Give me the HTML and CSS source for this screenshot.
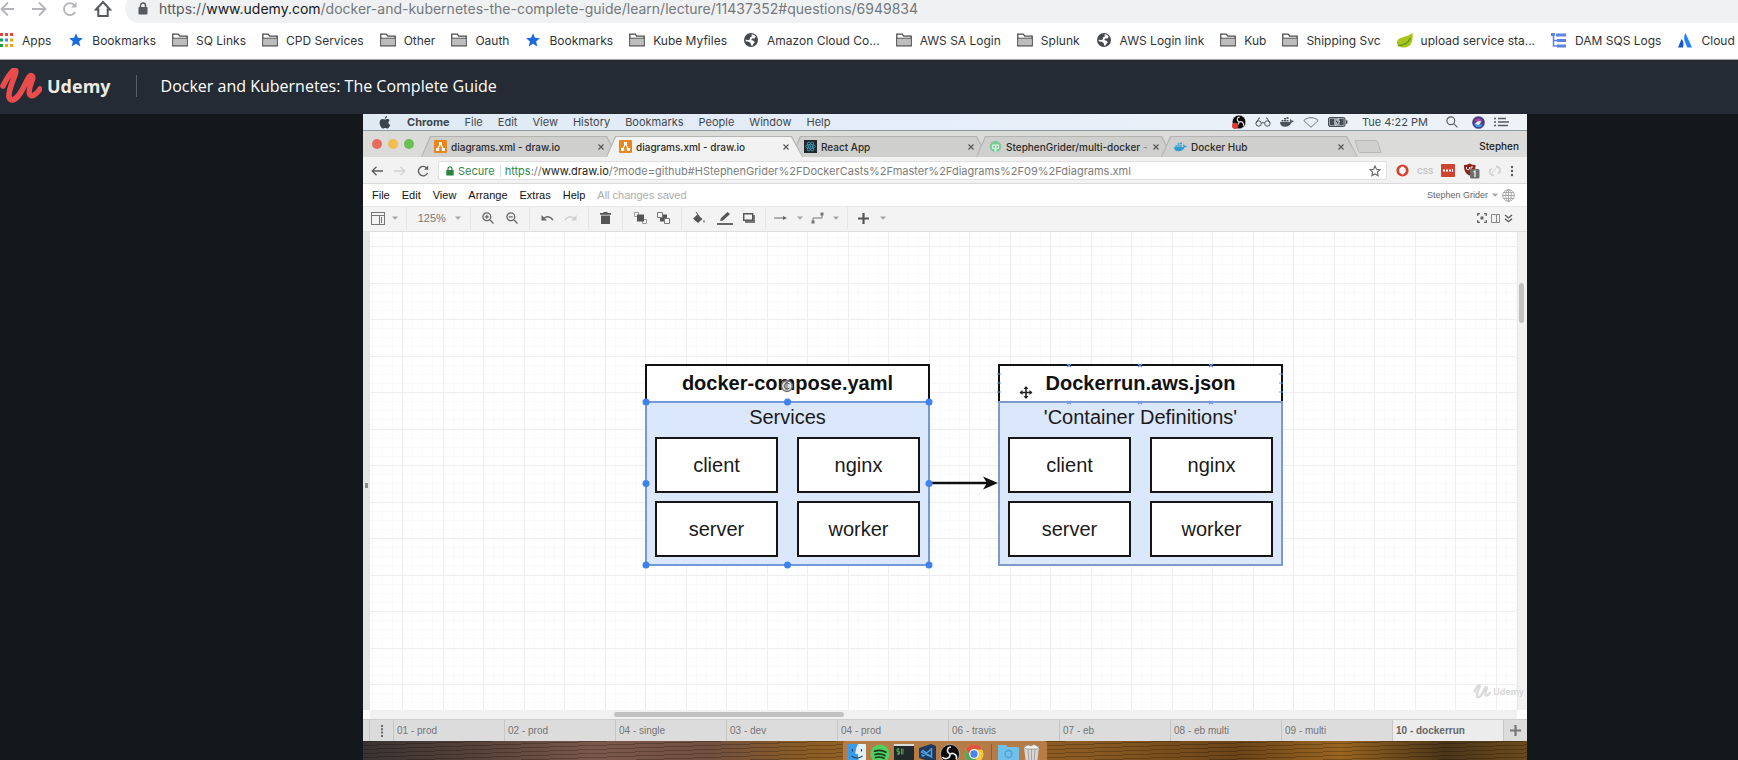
FILE: index.html
```html
<!DOCTYPE html>
<html lang="en">
<head>
<meta charset="utf-8">
<title>Docker and Kubernetes: The Complete Guide</title>
<link rel="stylesheet" href="styles.css">
</head>
<body>
<svg class="defs" aria-hidden="true">
  <symbol id="folder" viewBox="0 0 16 14"><path d="M.8 12.8V1.2h5.4l1.6 2h7.4v9.6z" fill="#fff" stroke="#4a4a4a" stroke-width="1.3"/><path d="M1.6 5.6h12.8V12H1.6z" fill="#bdbdbd"/><path d="M1 5.2h14" stroke="#4a4a4a"/></symbol>
  <symbol id="star" viewBox="0 0 16 16"><path d="M8 1.2l1.9 4.6 5 .4-3.8 3.3 1.2 4.9L8 11.8l-4.3 2.6 1.2-4.9L1.100 6.200l5-.4z" fill="#1a6be0"/></symbol>
  <symbol id="globe" viewBox="0 0 16 16"><circle cx="8" cy="8" r="7" fill="#46494d"/><path d="M8.500 2.200c2 .2 3.400 1.100 4.300 2.600l-1.400 1.600-2.200.2-1 1.400 2.400.8 1.200 1.600-1.600 1.600-.8 1.800-1.200-.4-.6-2.400-2-1.200-3-.6.2-1.600 2.400.6 1.600-1 .2-1.800 1.800-.8z" fill="#fff"/></symbol>
  <symbol id="caret" viewBox="0 0 6 4"><path d="M0 .5h6L3 3.700z" fill="#a5a5a5"/></symbol>
  <symbol id="drawio" viewBox="0 0 13 13"><rect width="13" height="13" rx="1" fill="#e8871e"/><path d="M6.500 4L3.500 9M6.500 4l3 5" stroke="#fff" stroke-width="1.200"/><path d="M5 2h3v3H5zM2 8h3.200v3H2zM7.800 8H11v3H7.800z" fill="#fff"/></symbol>
  <symbol id="close" viewBox="0 0 8 8"><path d="M1.500 1.500l5 5m0-5l-5 5" stroke="#555" stroke-width="1.100"/></symbol>
  <symbol id="whale" viewBox="0 0 14 10"><path d="M0 5h10.300c-.7-1.200-.5-2.200.1-3 .8.500 1.100 1.100 1.200 1.700.8-.2 1.600 0 2.200.4-.5 1-1.400 1.300-2.400 1.300C10.300 8.300 8 9.700 5 9.700 1.700 9.700.1 8 0 5zM1.500 3h2v1.600h-2zM4 3h2v1.600H4zM6.500 3h2v1.600h-2zM4 1h2v1.600H4zM6.500.2h2v1.900h-2z"/></symbol>
  <symbol id="obs" viewBox="0 0 20 20"><circle cx="10" cy="10" r="9.500" fill="#090909" stroke="#c9c9c9" stroke-width=".6"/><g fill="none" stroke="#e6e6e6" stroke-width="1.600"><path d="M10 10C6 8 7 3 11 3"/><path d="M10 10c4-2 8 2 6 5.500"/><path d="M10 10c.5 4.500-5 6-7.500 3"/></g></symbol>
  <symbol id="umark" viewBox="0 0 42 36"><path d="M3 18C7 10 11 4 14 2c2.500-.5 2 2 1 5C12 15 8 24 9 29c1.500 6 8 2 12-5 3-5 6-12 8-15 2-2.500 4.500-1 3.500 2-1.500 5-4.500 11-3 14.500C31 30 36 27 40 21" fill="none" stroke-width="5.600" stroke-linecap="round" stroke-linejoin="round"/></symbol>
</svg>

<header class="browser">
  <nav class="address-row" aria-label="Navigation">
    <button class="nav-btn" aria-label="Back"><svg width="16" height="16" viewBox="0 0 16 16"><path d="M14 8H2m6-6.500L1.500 8 8 14.500" fill="none" stroke="#b3b5b8" stroke-width="1.800"/></svg></button>
    <button class="nav-btn" aria-label="Forward"><svg width="16" height="16" viewBox="0 0 16 16"><path d="M1 8h13M8 1.500L14.500 8 8 14.500" fill="none" stroke="#b3b5b8" stroke-width="1.800"/></svg></button>
    <button class="nav-btn" aria-label="Reload"><svg width="16" height="16" viewBox="0 0 16 16"><path d="M13.200 11A6 6 0 1 1 12.400 4" fill="none" stroke="#b3b5b8" stroke-width="1.800"/><path d="M14.500 1v5.500H9z" fill="#b3b5b8"/></svg></button>
    <button class="nav-btn home" aria-label="Home"><svg width="16" height="18" viewBox="1 0 16 18"><path d="M2 9.500L9 2l7 7.500h-2.300V16H4.300V9.500z" fill="none" stroke="#55585c" stroke-width="2"/></svg></button>
    <div class="omnibox">
      <svg width="10" height="13" viewBox="0 0 10 13"><rect x=".5" y="5" width="9" height="7.500" rx="1" fill="#55585c"/><path d="M2.500 5.500V3.500a2.500 2.500 0 0 1 5 0v2" fill="none" stroke="#55585c" stroke-width="1.400"/></svg>
      <span class="omnibox-url"><span class="scheme">https://</span><span class="host">www.udemy.com</span>/docker-and-kubernetes-the-complete-guide/learn/lecture/11437352#questions/6949834</span>
    </div>
  </nav>
  <nav class="bookmarks" aria-label="Bookmarks">
    <a href="#" class="apps"><svg width="14" height="16" viewBox="0 0 14 16"><path fill="#ea4335" d="M0 1h3v3H0zM5 1h3v3H5zM10 1h3v3h-3z"/><path fill="#0f9d58" d="M0 6.500h3v3H0zM0 12h3v3H0z"/><path fill="#4285f4" d="M5 6.500h3v3H5z"/><path fill="#f4a400" d="M10 6.500h3v3h-3zM5 12h3v3H5zM10 12h3v3h-3z"/></svg>Apps</a>
    <a href="#"><svg width="16" height="16"><use href="#star"/></svg>Bookmarks</a>
    <a href="#"><svg width="16" height="14"><use href="#folder"/></svg>SQ Links</a>
    <a href="#"><svg width="16" height="14"><use href="#folder"/></svg>CPD Services</a>
    <a href="#"><svg width="16" height="14"><use href="#folder"/></svg>Other</a>
    <a href="#"><svg width="16" height="14"><use href="#folder"/></svg>Oauth</a>
    <a href="#"><svg width="16" height="16"><use href="#star"/></svg>Bookmarks</a>
    <a href="#"><svg width="16" height="14"><use href="#folder"/></svg>Kube Myfiles</a>
    <a href="#"><svg width="16" height="16"><use href="#globe"/></svg>Amazon Cloud Co...</a>
    <a href="#"><svg width="16" height="14"><use href="#folder"/></svg>AWS SA Login</a>
    <a href="#"><svg width="16" height="14"><use href="#folder"/></svg>Splunk</a>
    <a href="#"><svg width="16" height="16"><use href="#globe"/></svg>AWS Login link</a>
    <a href="#"><svg width="16" height="14"><use href="#folder"/></svg>Kub</a>
    <a href="#"><svg width="16" height="14"><use href="#folder"/></svg>Shipping Svc</a>
    <a href="#"><svg width="16" height="16" viewBox="0 0 16 16"><path d="M15.500.5c.8 6-.2 14-7 15C4 16 0 14.500 0 10.500 0 4 11 6 15.500.5z" fill="#a9c61c"/><path d="M1 13.500c6 0 10.500-3 12.500-7.500" fill="none" stroke="#5d9a1f" stroke-width="1.400"/></svg>upload service sta...</a>
    <a href="#"><svg width="16" height="16" viewBox="0 0 16 16"><path d="M0 1h4v3H0zM5 1.500h10v3H5zM6 7h9v3H6zM6 12.500h9v3H6z" fill="#5b83e6"/><path d="M2.500 4v10H6M2.500 8.500H6" fill="none" stroke="#5b83e6" stroke-width="1.500"/></svg>DAM SQS Logs</a>
    <a href="#"><svg width="16" height="16" viewBox="0 0 16 16"><path d="M4.500 7c1.800 2 2.700 4.500 1.500 8.500H1z" fill="#1558cf"/><path d="M8.500 1L15 15.500h-4.800C9 11 5 7 8.500 1z" fill="#2480ff"/></svg>Cloud I</a>
  </nav>
</header>

<header class="course">
  <a href="#" class="brand"><svg width="42" height="36" stroke="#ea4c4c"><use href="#umark"/></svg>Udemy</a>
  <h1>Docker and Kubernetes: The Complete Guide</h1>
</header>

<main class="player">
 <div class="screen">
  <div class="menubar">
    <svg class="apple" width="12" height="13" viewBox="0 0 12 13"><path d="M8 0c.1 1.500-1 2.700-2.300 2.700C5.600 1.400 6.700.2 8 0zM6 3.600c.7 0 1.300-.6 2.400-.6 1 0 1.900.5 2.400 1.300-2 1.200-1.700 3.900.4 4.700-.6 1.600-1.700 3.500-2.900 3.500-.8 0-1.100-.5-2.100-.5s-1.400.5-2.100.5C2.700 12.500.6 9.500.6 6.700.6 4.400 2 3.100 3.700 3.100c1 0 1.700.5 2.300.5z" fill="#3b444d"/></svg>
    <b>Chrome</b><span>File</span><span>Edit</span><span>View</span><span>History</span><span>Bookmarks</span><span>People</span><span>Window</span><span>Help</span>
    <div class="status">
      <svg width="14" height="14" viewBox="0 0 20 20"><use href="#obs"/><circle cx="4.500" cy="15.500" r="4.500" fill="#e03a30"/></svg>
      <svg width="16" height="10" viewBox="0 0 16 10" fill="none" stroke="#4a535c"><circle cx="3.600" cy="6.500" r="2.700"/><circle cx="12.400" cy="6.500" r="2.700"/><path d="M6.300 6.200q1.700-1.200 3.400 0M1 6l3-5h1M15 6l-3-5h-1"/></svg>
      <svg width="14" height="10" fill="#4a535c"><use href="#whale"/></svg>
      <svg width="16" height="11" viewBox="0 0 16 11"><path d="M.8 3.500C5-.3 11-.3 15.200 3.500L8 10.300z" fill="none" stroke="#6a737b"/></svg>
      <svg class="battery" width="20" height="10" viewBox="0 0 20 10"><rect x=".5" y=".5" width="16.500" height="9" rx="1.500" fill="#9aa2a9" stroke="#444c54"/><path d="M2 2h4v6H2zM11.500 2h4v6h-4zM18 3.300h1.400v3.400H18z" fill="#444c54"/><path d="M10.500 1L6.500 5.500h2.300L7.500 9l4.300-4.700H9.300z" fill="#333b42" stroke="#e8eef5" stroke-width=".6"/></svg>
      <span class="clock">Tue 4:22 PM</span>
      <svg class="find" width="12" height="12" viewBox="0 0 12 12" fill="none" stroke="#59626a" stroke-width="1.200"><circle cx="4.800" cy="4.800" r="3.900"/><path d="M7.700 7.700l3.700 3.700"/></svg>
      <svg class="siri" width="13" height="13" viewBox="0 0 13 13"><circle cx="6.500" cy="6.500" r="6.300" fill="#4b3d86"/><path d="M2 8.500a5 5 0 0 0 9 0z" fill="#3f9be0"/><path d="M2.500 4.500a5 5 0 0 1 8 0L6 6z" fill="#b0489c"/><path d="M2.500 8Q6 4 9.500 5.500L7 9z" fill="#dcebf8"/></svg>
      <svg width="15" height="10" viewBox="0 0 15 10" stroke="#535c64" stroke-width="1.400"><path d="M0 1.500h2M0 5h2M0 8.500h2M4 1.500h8M4 5h11M4 8.500h10"/></svg>
    </div>
  </div>

  <div class="tabstrip">
    <div class="lights"><i class="red"></i><i class="amber"></i><i class="green"></i></div>
    <div class="tab"><svg width="13" height="13"><use href="#drawio"/></svg><span>diagrams.xml - draw.io</span><button aria-label="Close tab"><svg width="8" height="8"><use href="#close"/></svg></button></div>
    <div class="tab active"><svg width="13" height="13"><use href="#drawio"/></svg><span>diagrams.xml - draw.io</span><button aria-label="Close tab"><svg width="8" height="8"><use href="#close"/></svg></button></div>
    <div class="tab"><svg width="13" height="13" viewBox="0 0 13 13"><rect width="13" height="13" fill="#20282e"/><g fill="none" stroke="#3d9fbd" stroke-width=".8"><ellipse cx="6.500" cy="6.500" rx="5" ry="2"/><ellipse cx="6.500" cy="6.500" rx="5" ry="2" transform="rotate(60 6.500 6.500)"/><ellipse cx="6.500" cy="6.500" rx="5" ry="2" transform="rotate(120 6.500 6.500)"/></g><circle cx="6.500" cy="6.500" r="1" fill="#3d9fbd"/></svg><span>React App</span><button aria-label="Close tab"><svg width="8" height="8"><use href="#close"/></svg></button></div>
    <div class="tab"><svg width="13" height="13" viewBox="0 0 13 13"><circle cx="6.500" cy="6.500" r="5.800" fill="#7ccb98"/><path d="M3 4.500h7v4.500H3zM5.500 9h2v3h-2z" fill="#cfeeda"/><path d="M4.500 6h1.200v1.600H4.500zM7.500 6h1.200v1.600H7.500z" fill="#4fae74"/></svg><span>StephenGrider/multi-docker <em>-</em></span><button aria-label="Close tab"><svg width="8" height="8"><use href="#close"/></svg></button></div>
    <div class="tab"><svg width="13" height="10" fill="#2f9fd0"><use href="#whale"/></svg><span>Docker Hub</span><button aria-label="Close tab"><svg width="8" height="8"><use href="#close"/></svg></button></div>
    <button class="new-tab" aria-label="New tab"><svg width="28" height="13" viewBox="0 0 28 13"><path d="M1 .5h20.500q1.500 0 2 1L27 12.500H6.500q-1.500 0-2-1z" fill="#d0d0ce" stroke="#b9b9b7"/></svg></button>
    <span class="profile">Stephen</span>
  </div>

  <div class="inner-address">
    <button aria-label="Back"><svg width="12" height="10" viewBox="0 0 12 10"><path d="M12 5H1.500m4-4.300L1.200 5l4.300 4.300" fill="none" stroke="#5b5b5b" stroke-width="1.300"/></svg></button>
    <button aria-label="Forward"><svg width="12" height="10" viewBox="0 0 12 10"><path d="M0 5h10.500m-4-4.300L10.800 5 6.500 9.300" fill="none" stroke="#d2d2d2" stroke-width="1.300"/></svg></button>
    <button aria-label="Reload"><svg width="12" height="12" viewBox="0 0 12 12"><path d="M10.500 8A4.700 4.700 0 1 1 9.500 2.800" fill="none" stroke="#5b5b5b" stroke-width="1.300"/><path d="M11.200.5v4.200H7z" fill="#5b5b5b"/></svg></button>
    <div class="inner-omnibox">
      <svg width="8" height="10" viewBox="0 0 8 10"><rect x=".3" y="4" width="7.400" height="5.500" rx=".6" fill="#2c8242"/><path d="M2 4.500V2.800a2 2 0 0 1 4 0v1.700" fill="none" stroke="#2c8242" stroke-width="1.200"/></svg>
      <span class="secure">Secure</span>
      <span class="inner-url"><span class="scheme">https</span>://<span class="host">www.draw.io</span>/?mode=github#HStephenGrider%2FDockerCasts%2Fmaster%2Fdiagrams%2F09%2Fdiagrams.xml</span>
      <svg class="fav" width="12" height="12" viewBox="0 0 12 12"><path d="M6 1l1.500 3.300 3.500.4-2.600 2.400.7 3.600L6 8.900l-3.100 1.800.7-3.600L1 4.700l3.500-.4z" fill="none" stroke="#666" stroke-width="1.100"/></svg>
    </div>
    <div class="extensions">
      <svg width="13" height="13" viewBox="0 0 13 13"><circle cx="6.500" cy="6.500" r="4.700" fill="#fff" stroke="#d8432f" stroke-width="2.800"/><ellipse cx="6.500" cy="6.500" rx="2" ry="4" fill="#fff"/></svg>
      <span class="css-ext">CSS</span>
      <svg width="14" height="13" viewBox="0 0 14 13"><rect width="14" height="13" rx="1" fill="#cf4430"/><path d="M2 5.500h2v2H2zM5 5.500h2v2H5zM8 5.500h2v2H8zM11 5h1v3h-1z" fill="#fff"/></svg>
      <svg width="17" height="16" viewBox="0 0 17 16"><path d="M1 2q3 0 5.500-1.500Q9 2 12.500 2c0 6-1.500 8.500-6 10.500C2 10.500 1 7 1 2z" fill="#8d2418"/><path d="M3.500 4v2q1.500 2 3 0V4m1.500 3V4h2" fill="none" stroke="#eee"/><rect x="7" y="6" width="9.500" height="9.500" rx="1.500" fill="#6d6d6d"/><path d="M10.500 9l1.500-1v6" fill="none" stroke="#fff" stroke-width="1.200"/></svg>
      <svg width="14" height="12" viewBox="0 0 14 12" fill="none" stroke="#d3d3d3" stroke-width="1.800"><path d="M6 10.500C1 10 .5 5 4 3.500M8 1.500c5 .5 5.500 5.500 2 7"/><path d="M4 8l4-5" stroke-width="1"/></svg>
      <svg width="4" height="12" viewBox="0 0 4 12" fill="#5c5c5c"><circle cx="2" cy="2" r="1.200"/><circle cx="2" cy="6" r="1.200"/><circle cx="2" cy="10" r="1.200"/></svg>
    </div>
  </div>

  <div class="app-menu">
    <button>File</button><button>Edit</button><button>View</button><button>Arrange</button><button>Extras</button><button>Help</button>
    <span class="saved">All changes saved</span>
    <button class="account">Stephen Grider<svg width="6" height="4"><use href="#caret"/></svg></button>
    <button aria-label="Language"><svg width="13" height="13" viewBox="0 0 13 13" fill="none" stroke="#a9a9a9"><circle cx="6.500" cy="6.500" r="5.800"/><ellipse cx="6.500" cy="6.500" rx="2.800" ry="5.800"/><path d="M6.500.7v11.600M.7 6.500h11.600M1.500 3.500h10M1.500 9.500h10"/></svg></button>
  </div>

  <div class="toolbar">
    <div class="group layout"><button aria-label="View"><svg width="14" height="13" viewBox="0 0 14 13" fill="none" stroke="#777"><rect x=".5" y=".5" width="13" height="12"/><path d="M.5 3.500h13M8.500 3.500v9M10.500 5v6"/></svg></button><svg width="6" height="4"><use href="#caret"/></svg></div>
    <div class="group zoom"><select aria-label="Zoom"><option>125%</option></select><svg width="6" height="4"><use href="#caret"/></svg></div>
    <div class="group pair"><button aria-label="Zoom in"><svg width="12" height="12" viewBox="0 0 12 12" fill="none" stroke="#666" stroke-width="1.300"><circle cx="4.800" cy="4.800" r="3.900"/><path d="M7.700 7.700l3.800 3.800M2.800 4.800h4M4.800 2.800v4"/></svg></button><button aria-label="Zoom out"><svg width="12" height="12" viewBox="0 0 12 12" fill="none" stroke="#666" stroke-width="1.300"><circle cx="4.800" cy="4.800" r="3.900"/><path d="M7.700 7.700l3.800 3.800M2.800 4.800h4"/></svg></button></div>
    <div class="group pair"><button aria-label="Undo"><svg width="13" height="8" viewBox="0 0 13 8"><path d="M2 5q5-5 10 1" fill="none" stroke="#666" stroke-width="1.600"/><path d="M.5 1v5.500H6z" fill="#666"/></svg></button><button aria-label="Redo"><svg width="13" height="8" viewBox="0 0 13 8"><path d="M11 5Q6 0 1 6" fill="none" stroke="#cfcfcf" stroke-width="1.600"/><path d="M12.500 1v5.500H7z" fill="#cfcfcf"/></svg></button></div>
    <div class="group single"><button aria-label="Delete"><svg width="11" height="12" viewBox="0 0 11 12" fill="#555"><path d="M0 1h3.500V0h4v1H11v1.700H0zM1 3.500h9V12H1z"/></svg></button></div>
    <div class="group pair"><button aria-label="To front"><svg width="13" height="12" viewBox="0 0 13 12"><path d="M.5.500h4v4h-4zM8.500 7.500h4v4h-4z" fill="none" stroke="#999"/><path d="M3 2.500h7v7H3z" fill="#555"/></svg></button><button aria-label="To back"><svg width="13" height="12" viewBox="0 0 13 12"><path d="M3 2.500h7v7H3z" fill="#555"/><path d="M.5.500h5v5h-5zM7.500 6.500h5v5h-5z" fill="#f3f3f3" stroke="#777"/></svg></button></div>
    <div class="group triple"><button aria-label="Fill"><svg width="14" height="12" viewBox="0 0 14 12"><path d="M5.500 2.500L10.500 7 6 11 1 6.500z" fill="#555"/><path d="M4 0l3 4" stroke="#555"/><path d="M12 7.500q1.600 2.500 0 3.200-1.600-.7 0-3.200z" fill="#777"/></svg></button><button aria-label="Line"><svg width="16" height="13" viewBox="0 0 16 13"><path d="M0 11h16v2H0z" fill="#666"/><path d="M3 9l1-3 6.500-6L13 2 6 8.500z" fill="#555"/></svg></button><button aria-label="Shadow"><svg width="12" height="10" viewBox="0 0 12 10"><path d="M2 2h10v8H2z" fill="#777"/><path d="M.7.700h9v6.600h-9z" fill="#f3f3f3" stroke="#555" stroke-width="1.400"/></svg></button></div>
    <div class="group lines"><button aria-label="Connection"><svg width="14" height="6" viewBox="0 0 14 6"><path d="M0 3h10" stroke="#666"/><path d="M9 1l4 2-4 2z" fill="#666"/></svg></button><svg width="6" height="4"><use href="#caret"/></svg><button aria-label="Waypoints"><svg width="13" height="12" viewBox="0 0 13 12"><path d="M2 10V6h9V2" fill="none" stroke="#777"/><path d="M.5 8.500h3v3h-3zM9.500.500h3v3h-3z" fill="#777"/></svg></button><svg width="6" height="4"><use href="#caret"/></svg></div>
    <div class="group insert"><button aria-label="Insert"><svg width="11" height="11" viewBox="0 0 11 11"><path d="M5.500 0v11M0 5.500h11" stroke="#555" stroke-width="2.200"/></svg></button><svg width="6" height="4"><use href="#caret"/></svg></div>
    <div class="view-tools">
      <button aria-label="Fullscreen"><svg width="10" height="10" viewBox="0 0 10 10"><path d="M.7 3V.7H3M7 .7h2.300V3M9.300 7v2.300H7M3 9.300H.7V7" fill="none" stroke="#666" stroke-width="1.300"/><path d="M3.500 3.500h3v3h-3z" fill="#666"/></svg></button>
      <button aria-label="Format panel"><svg width="9" height="9" viewBox="0 0 9 9" fill="none" stroke="#888"><path d="M.5.500h8v8h-8zM5.500.500v8"/></svg></button>
      <button aria-label="Collapse"><svg width="9" height="9" viewBox="0 0 9 9" fill="none" stroke="#555" stroke-width="1.300"><path d="M1 1l3.500 3L8 1M1 4.700l3.500 3 3.500-3"/></svg></button>
    </div>
  </div>

  <div class="workspace">
    <div class="side-handle"></div>
    <div class="canvas">
      <svg class="grid" width="100%" height="100%" aria-hidden="true">
        <defs><pattern id="gridlines" x="32" y="14" width="81" height="73" patternUnits="userSpaceOnUse">
          <path d="M10.500 0v73M20.500 0v73M30.500 0v73M51.500 0v73M61.500 0v73M71.500 0v73M0 9.500h81M0 18.500h81M0 27.500h81M0 46.500h81M0 55.500h81M0 64.500h81" stroke="#f9f9f9"/>
          <path d="M.5 0v73M41.500 0v73M0 .5h81M0 37.500h81" stroke="#eeeeee"/>
        </pattern></defs>
        <rect width="100%" height="100%" fill="url(#gridlines)"/>
      </svg>
      <div class="diagram">
        <section class="doc">
          <h2>docker-compose.yaml</h2>
          <div class="services">
            <h3>Services</h3>
            <div class="nodes"><div>client</div><div>nginx</div><div>server</div><div>worker</div></div>
          </div>
          <svg class="overlay" viewBox="0 0 285 202"><path d="M1 38h283v163H1z" fill="none" stroke="#6d9ae0" stroke-width="1.500"/><g fill="#3f82ee"><circle cx="1" cy="38" r="3.500"/><circle cx="142.500" cy="38" r="3.500"/><circle cx="284" cy="38" r="3.500"/><circle cx="1" cy="119.500" r="3.500"/><circle cx="284" cy="119.500" r="3.500"/><circle cx="1" cy="201" r="3.500"/><circle cx="142.500" cy="201" r="3.500"/><circle cx="284" cy="201" r="3.500"/></g><circle cx="142" cy="22" r="5.500" fill="#d8d8d8" fill-opacity=".7" stroke="#666" stroke-width="1.300"/><path d="M144.500 20a3 3 0 1 0 0 4" fill="none" stroke="#555"/></svg>
        </section>
        <svg class="arrow" width="68" height="16" viewBox="0 0 68 16"><path d="M2 8h56" stroke="#111" stroke-width="2.400"/><path d="M68 8L53 1.500 57 8l-4 6.500z" fill="#111"/></svg>
        <section class="doc target">
          <h2>Dockerrun.aws.json</h2>
          <div class="services">
            <h3>'Container Definitions'</h3>
            <div class="nodes"><div>client</div><div>nginx</div><div>server</div><div>worker</div></div>
          </div>
          <svg class="overlay" viewBox="0 0 285 202"><path d="M69 0l4 3m0-3l-4 3M140 0l4 3m0-3l-4 3M211 0l4 3m0-3l-4 3M69 37l4 3m0-3l-4 3M140 37l4 3m0-3l-4 3M211 37l4 3m0-3l-4 3M-1 10h4M-1 19h4M-1 28h4M281 10h4M281 19h4M281 28h4" stroke="#6b9af0" stroke-width="1.200"/><path d="M28 23v11M22.500 28.500h11" stroke="#222" stroke-width="1.600"/><path d="M28 22l2.500 3h-5zM28 35l2.500-3h-5zM21.500 28.500l3-2.500v5zM34.500 28.500l-3-2.500v5z" fill="#222"/></svg>
        </section>
      </div>
    </div>
    <div class="vscroll"><i></i></div>
    <div class="watermark"><svg width="18" height="15" stroke="#dadada"><use href="#umark"/></svg>Udemy</div>
  </div>
  <div class="hscroll"><i></i></div>

  <div class="pages">
    <button class="page-menu" aria-label="Pages"><svg width="4" height="12" viewBox="0 0 4 12" fill="#666"><path d="M1 0h2v2H1zM1 3.300h2v2H1zM1 6.600h2v2H1zM1 10h2v2H1z"/></svg></button>
    <button>01 - prod</button><button>02 - prod</button><button>04 - single</button><button>03 - dev</button><button>04 - prod</button><button>06 - travis</button><button>07 - eb</button><button>08 - eb multi</button><button>09 - multi</button><button class="current">10 - dockerrun</button>
    <button class="page-add" aria-label="Add page"><svg width="11" height="11" viewBox="0 0 11 11"><path d="M5.500 0v11M0 5.500h11" stroke="#777" stroke-width="2.200"/></svg></button>
  </div>

  <div class="desktop">
    <div class="dock">
      <svg width="18" height="18" viewBox="0 0 18 18"><rect width="18" height="18" rx="1" fill="#e4eef6"/><path d="M0 0h10Q7 5 7.500 10H10q0 4 1 8H0z" fill="#3a9be8"/><path d="M4.500 5v2.500M13.500 5v2.500M3.500 12q5.500 4 11 0" fill="none" stroke="#1c3d63" stroke-width="1.100"/></svg>
      <svg width="20" height="20" viewBox="0 0 20 20"><circle cx="10" cy="10" r="9.500" fill="#52cf62"/><path d="M4.500 7.200q6-2 11.500 1M5 10.500q5-1.500 10 1M5.500 13.500q4.500-1.300 8.500.8" fill="none" stroke="#173a1c" stroke-width="1.700" stroke-linecap="round"/></svg>
      <svg width="20" height="17" viewBox="0 0 20 17"><path d="M0 0h20v17H0z" fill="#22292b"/><path d="M0 0h20v2H0z" fill="#ddd"/><path d="M5.500 5H3v2.500h2.500V10H3M4.200 4v7M7.500 4.500v6M9 4.500v6" fill="none" stroke="#49a84b"/></svg>
      <svg width="18" height="18" viewBox="0 0 18 18"><path d="M1 4L13 0l5 2v14l-5 2L1 14z" fill="#213a5c"/><path d="M13.500 4v9L5 6.500 3.500 8 11 12M3.500 10.500L5 12l8.500-7" fill="none" stroke="#4da3e8" stroke-width="1.400"/></svg>
      <svg width="20" height="20"><use href="#obs"/></svg>
      <svg width="20" height="20" viewBox="0 0 20 20"><circle cx="10" cy="10" r="9.500" fill="#f4c93c"/><path d="M1.800 5.200A9.500 9.500 0 0 1 18.300 5.500H10L6 12z" fill="#df5340"/><path d="M1.800 5.200A9.500 9.500 0 0 0 9.500 19.500L13.500 12H6z" fill="#52a85a"/><circle cx="10" cy="10" r="4.300" fill="#4b83e8" stroke="#f3f3f3" stroke-width="1.300"/></svg>
      <i class="dock-line"></i>
      <svg width="21" height="18" viewBox="0 0 21 18"><path d="M0 1h8l1.500 2H21v15H0z" fill="#6fc0ea"/><circle cx="10.500" cy="10" r="3.500" fill="none" stroke="#4b9fce" stroke-width="1.300"/></svg>
      <svg width="17" height="20" viewBox="0 0 17 20"><path d="M1 3h15l-2 17H3z" fill="#d5d5d5"/><path d="M5 5l1 14M8.500 5v14M12 5l-1 14" stroke="#a5a5a5"/><path d="M1 3l4-2 3 1 3-1.500L16 3l-2 2H3z" fill="#f3f3f3" stroke="#8c8c8c" stroke-width=".7"/></svg>
    </div>
  </div>
 </div>
</main>
</body>
</html>
```
FILE: styles.css
```css
* { box-sizing: border-box; }
body {
  margin: 0;
  height: 100vh;
  display: flex;
  flex-direction: column;
  overflow: hidden;
  background: #14171b;
  font-family: Inter, "Liberation Sans", sans-serif;
}
svg { display: block; flex: none; overflow: visible; }
i { display: block; }
a { color: inherit; text-decoration: none; }
h1, h2, h3 { margin: 0; font-weight: 400; }
button, select {
  margin: 0;
  padding: 0;
  border: 0;
  background: none;
  color: inherit;
  font: inherit;
}
.defs { position: absolute; width: 0; height: 0; }

/* outer browser */
.browser { background: #fff; border-bottom: 1px solid #a3a3a3; overflow: hidden; flex: none; }
.address-row { display: flex; align-items: center; height: 30px; margin-top: -7px; padding-top: 1px; }
.nav-btn { width: 31px; display: flex; }
.nav-btn.home { padding-left: 2px; }
.omnibox {
  flex: 1;
  height: 29px;
  display: flex;
  align-items: center;
  gap: 11px;
  margin-left: 1px;
  padding-left: 13px;
  border-radius: 15px 0 0 15px;
  background: #eff1f3;
}
.omnibox-url { font-size: 14px; color: #74787c; white-space: nowrap; }
.omnibox .scheme { color: #55595d; }
.omnibox .host { color: #17191b; }
.bookmarks { display: flex; align-items: center; gap: 16px; height: 36px; padding-bottom: 2px; overflow: hidden; }
.bookmarks a { display: flex; align-items: center; gap: 8px; font-size: 12px; color: #303336; white-space: nowrap; }
.bookmarks .apps { margin-right: 1px; }

/* course header */
.course {
  display: flex;
  align-items: center;
  flex: none;
  height: 54px;
  padding-bottom: 2px;
  background: #252b35;
  font-family: "Open Sans", sans-serif;
  color: #fff;
}
.brand { display: flex; align-items: center; gap: 5px; font-size: 18px; font-weight: 700; color: #eceae3; }
.course h1 {
  margin-left: 25px;
  padding-left: 24px;
  border-left: 1px solid #59606a;
  font-size: 16px;
  line-height: 22px;
}

/* video */
.player { flex: 1; display: flex; min-height: 0; padding: 0 211px 0 363px; }
.screen { flex: 1; min-width: 0; display: flex; flex-direction: column; background: #fff; overflow: hidden; }
.screen > * { flex: none; }

.menubar {
  display: flex;
  align-items: center;
  gap: 15px;
  height: 17px;
  padding: 0 18px 0 16px;
  background: linear-gradient(90deg, #dfeaf3, #e6eef9 50%, #edf3f7);
  border-bottom: 1px solid #8a9aa4;
  font-size: 11px;
  color: #3f474e;
  white-space: nowrap;
}
.menubar b { margin-left: 1px; }
.status { display: flex; align-items: center; gap: 9px; margin-left: auto; }
.clock { margin: 0 9px 0 5px; }
.find { margin-right: 5px; }

.tabstrip { display: flex; align-items: flex-end; height: 27px; background: #dbdbd9; border-bottom: 1px solid #f2f2f2; }
.lights { display: flex; gap: 6px; width: 58px; padding-left: 9px; align-self: center; }
.lights i { width: 10px; height: 10px; border-radius: 50%; }
.red { background: #ea6a5e; }
.amber { background: #f0bd50; }
.green { background: #68c155; }
.tab {
  position: relative;
  display: flex;
  align-items: center;
  gap: 4px;
  flex: 0 1 197px;
  min-width: 0;
  height: 21px;
  padding: 0 13px;
  background: #b4b4b2;
  clip-path: polygon(9px 0, 186px 0, 197px 100%, 0 100%);
  font-size: 10px;
  font-weight: 500;
  color: #2b2b2b;
  white-space: nowrap;
}
.tab::before {
  content: "";
  position: absolute;
  inset: 1px 1px 0;
  background: #cfcfcd;
  clip-path: polygon(9px 0, 184px 0, 195px 100%, 0 100%);
}
.tab > * { position: relative; }
.tab + .tab { margin-left: -12px; }
.tab.active { z-index: 1; }
.tab.active::before { background: #f2f2f2; }
.tab span { flex: 1; }
.tab em { font-style: normal; color: #8a8a8a; }
.new-tab { margin: 0 0 4px -4px; }
.profile { margin: 0 8px 5px auto; font-size: 10px; font-weight: 500; color: #222; }

.inner-address { display: flex; align-items: center; height: 26px; padding-left: 8px; background: #f2f2f2; border-bottom: 1px solid #dadada; }
.inner-address > button { width: 23px; }
.inner-omnibox {
  flex: 1;
  display: flex;
  align-items: center;
  height: 19px;
  margin-left: -2px;
  padding: 0 5px 0 7px;
  background: #fff;
  border: 1px solid #e0e0e0;
  border-radius: 2px;
  font-size: 11px;
  color: #7d7d7d;
  white-space: nowrap;
}
.secure { margin: 0 4px; padding-right: 5px; border-right: 1px solid #ddd; line-height: 12px; }
.secure, .inner-omnibox .scheme { color: #35874a; }
.inner-omnibox .host { color: #222; }
.fav { margin-left: auto; }
.extensions { display: flex; align-items: center; justify-content: space-between; width: 140px; padding: 0 13px 0 9px; }
.css-ext { font-size: 8px; font-weight: 600; color: #c3c3c3; }

.app-menu {
  display: flex;
  align-items: center;
  gap: 12px;
  height: 22px;
  padding: 0 12px 0 9px;
  background: #fff;
  font-family: "Liberation Sans", Arial, sans-serif;
  font-size: 11px;
  color: #111;
}
.saved { color: #adadad; }
.account { display: flex; align-items: center; gap: 4px; margin: 0 -8px 0 auto; font-size: 9px; color: #666; }

.toolbar { display: flex; height: 26px; padding-bottom: 2px; background: #f3f3f3; border-top: 1px solid #e8e8e8; border-bottom: 1px solid #dedede; }
.group { display: flex; align-items: center; justify-content: space-evenly; border-right: 1px solid #e6e6e6; }
.layout { width: 44px; }
.zoom { width: 64px; padding-left: 2px; }
.zoom select { appearance: none; font-family: "Liberation Sans", Arial, sans-serif; font-size: 11px; color: #777; }
.pair { width: 59px; }
.single { width: 34px; }
.triple { width: 84px; }
.lines { width: 82px; }
.insert { width: 48px; border-right: 0; }
.view-tools { display: flex; align-items: center; gap: 4px; margin-left: auto; padding-right: 14px; }

.screen > .workspace { position: relative; display: flex; flex: 1; min-height: 0; }
.side-handle { width: 7px; background: linear-gradient(#8c8c8c, #8c8c8c) 2px 53% / 3px 5px no-repeat #e4e4e4; }
.canvas { position: relative; flex: 1; overflow: hidden; background: #fff; }
.grid { position: absolute; inset: 0; }
.diagram { position: absolute; left: 275px; top: 132px; display: flex; font-family: "Liberation Sans", Arial, sans-serif; font-size: 20px; color: #1a1a1a; }
.doc { position: relative; width: 285px; }
.doc h2 { height: 37px; border: 2px solid #111; border-bottom: 0; background: #fff; font-size: 20px; font-weight: 700; line-height: 34px; text-align: center; color: #111; }
.services { padding: 0 8px 7px; border: 2px solid #7f9bc9; background: #dbe7fa; }
.services h3 { height: 34px; font-size: 20px; line-height: 28px; text-align: center; }
.nodes { display: grid; grid-template-columns: 1fr 1fr; gap: 8px 19px; }
.nodes div { height: 56px; border: 2px solid #151515; background: #fff; line-height: 52px; text-align: center; }
.overlay { position: absolute; inset: 0; }
.arrow { margin-top: 111px; }
.watermark { position: absolute; right: 3px; bottom: 11px; display: flex; align-items: center; gap: 2px; font-size: 9px; font-weight: 600; color: #d4d4d4; }
.vscroll { width: 10px; background: #f1f1f1; border-left: 1px solid #e8e8e8; }
.vscroll i { width: 5px; height: 40px; margin: 51px 0 0 1px; border-radius: 3px; background: #c1c1c1; }
.hscroll { height: 9px; margin: 0 10px 0 7px; background: #f1f1f1; padding-top: 2px; }
.hscroll i { width: 230px; height: 5px; margin-left: 244px; border-radius: 3px; background: #c1c1c1; }

.pages { display: flex; height: 22px; padding-left: 6px; background: #dcdcdc; border-top: 1px solid #cdcdcd; font-family: "Liberation Sans", Arial, sans-serif; font-size: 10px; color: #757575; }
.pages button { flex: 1; padding-left: 3px; border-left: 1px solid #c6c6c6; text-align: left; white-space: nowrap; }
.pages .page-menu { flex: 0 0 24px; padding-left: 10px; }
.pages .page-add { flex: 0 0 24px; padding-left: 6px; }
.pages .current { background: #ececec; font-weight: 700; color: #666; }

.desktop {
  height: 19px;
  display: flex;
  padding-left: 480px;
  background:
    repeating-linear-gradient(178deg, rgba(0, 0, 0, .22) 0 1px, transparent 1px 4px),
    linear-gradient(90deg, #3a3330, #574239 10%, #7b584b 20%, #71503f 30%, #8a5c23 38%, #9a6424 45%, #8a5a22 62%, #6b4418 75%, #9a6420 84%, #4a3518 93%, #6b4b1c);
}
.dock { display: flex; align-items: flex-start; gap: 4px; width: 204px; padding: 3px 5px 0; border-radius: 3px 3px 0 0; background: #b67c48; }
.dock-line { width: 1px; height: 16px; background: #8d5c32; margin: 0 2px 0 3px; }
```
